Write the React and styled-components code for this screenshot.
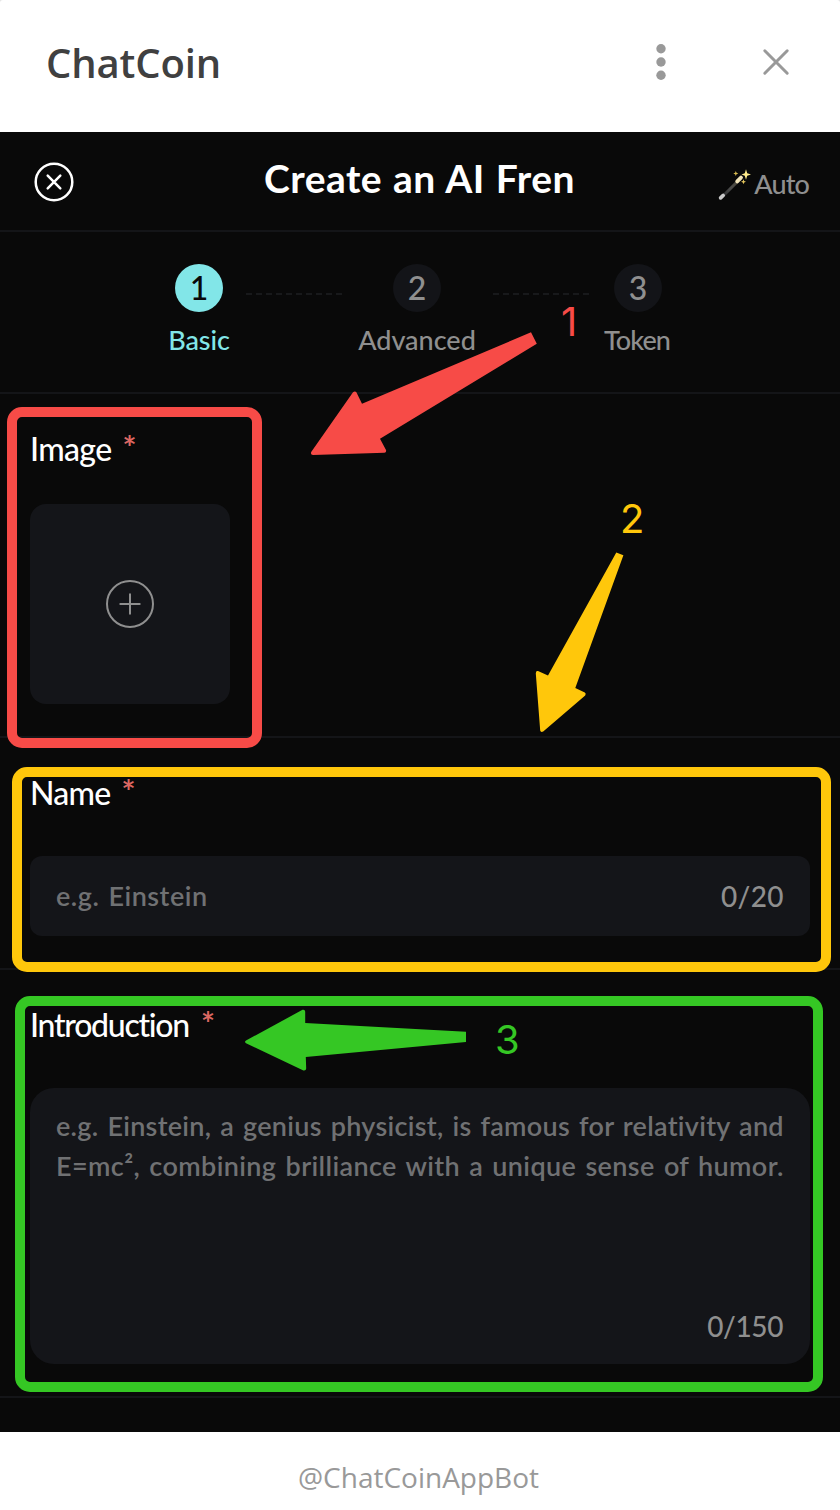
import React from "react";
import styled, { createGlobalStyle } from "styled-components";

const geometric = 'Lato, "Liberation Sans", sans-serif';
const humanist = '"Open Sans", "Noto Sans", sans-serif';

const GlobalStyle = createGlobalStyle`
  * { box-sizing: border-box; }
  html, body { margin: 0; padding: 0; background: #e4e4e4; }
`;

const Window = styled.div`
  position: relative;
  display: flex;
  flex-direction: column;
  width: 840px;
  height: 1510px;
  overflow: hidden;
  border-radius: 3px 3px 0 0;
  background: #fff;
  font-variant-ligatures: none;
`;

const TitleBar = styled.header`
  display: flex;
  align-items: center;
  flex: none;
  height: 132px;
  padding: 0 45px 8px 46px;
`;

const AppName = styled.h1`
  flex: 1;
  margin: 0;
  padding-top: 2px;
  font: 600 40px/54px ${humanist};
  letter-spacing: ${(p) => p.$track || 0}px;
  color: #404040;
`;

const WindowActions = styled.div`
  display: flex;
  align-items: center;
  gap: 90px;
`;

const Icon = styled.svg`
  display: block;
  flex: none;
  overflow: visible;
`;

const Body = styled.main`
  display: flex;
  flex-direction: column;
  flex: none;
  height: 1300px;
  background: #090909;
  font-family: ${geometric};
`;

const PageHeader = styled.div`
  display: grid;
  grid-template-columns: 120px 1fr 120px;
  align-items: center;
  height: 100px;
  padding: 0 31px 0 34px;
  border-bottom: 2px solid #141518;
`;

const PageTitle = styled.h2`
  margin: 0;
  padding: 0 4px 6px 0;
  text-align: center;
  white-space: nowrap;
  font: 700 39px/52px ${geometric};
  word-spacing: 1px;
  letter-spacing: ${(p) => p.$track || 0}px;
  color: #fff;
`;

const AutoButton = styled.div`
  display: flex;
  align-items: center;
  justify-content: flex-end;
  gap: 4px;
  padding-top: 6px;
  font-size: 27px;
  font-weight: 500;
  line-height: 36px;
  letter-spacing: ${(p) => p.$track || 0}px;
  color: #8f8f8f;
`;

const Stepper = styled.div`
  display: flex;
  align-items: flex-start;
  height: 162px;
  padding: 32px 0 0 139px;
  border-bottom: 2px solid #141518;
`;

const Step = styled.div`
  display: flex;
  flex-direction: column;
  align-items: center;
  width: 120px;
  gap: 10px;
  font-weight: 500;
  color: ${(p) => (p.$active ? "#82e6e8" : "#8f8f8f")};
`;

const StepNumber = styled.div`
  display: flex;
  align-items: center;
  justify-content: center;
  width: 48px;
  height: 48px;
  border-radius: 50%;
  background: ${(p) => (p.$active ? "#82e6e8" : "#131418")};
  color: ${(p) => (p.$active ? "#090909" : "#8f8f8f")};
  font-size: 32px;
  line-height: 48px;
`;

const StepLabel = styled.div`
  padding-right: ${(p) => p.$inset || 0}px;
  font-size: 27px;
  line-height: 36px;
  white-space: nowrap;
  letter-spacing: ${(p) => p.$track || 0}px;
`;

const StepLink = styled.div`
  width: 96px;
  margin: 29px ${(p) => p.$right}px 0 ${(p) => p.$left}px;
  border-top: 2px dashed #18191b;
`;

const Section = styled.section`
  display: flex;
  flex-direction: column;
  gap: ${(p) => p.$gap}px;
  padding: 32px 30px;
  border-bottom: 2px solid #141518;
`;

const FieldLabel = styled.div`
  display: flex;
  gap: ${(p) => p.$gap || 11}px;
  height: 46px;
  font-size: 32px;
  font-weight: 500;
  line-height: 46px;
  letter-spacing: ${(p) => p.$track || 0}px;
  color: #fff;
`;

const Required = styled.span`
  font-size: 33px;
  font-weight: 700;
  line-height: 42px;
  letter-spacing: 0;
  color: #db6762;
`;

const UploadTile = styled.div`
  display: flex;
  align-items: center;
  justify-content: center;
  width: 200px;
  height: 200px;
  border-radius: 16px;
  background: #141519;
`;

const TextField = styled.div`
  display: flex;
  align-items: center;
  justify-content: space-between;
  height: 80px;
  padding: 0 26px;
  border-radius: 12px;
  background: #141519;
`;

const TextArea = styled.div`
  display: flex;
  flex-direction: column;
  justify-content: space-between;
  height: 276px;
  padding: 18px 26px 18px;
  border-radius: 24px;
  background: #141519;
`;

const Placeholder = styled.div`
  font-size: 27px;
  font-weight: 600;
  line-height: 40px;
  white-space: nowrap;
  word-spacing: 2px;
  letter-spacing: ${(p) => p.$track || 0}px;
  color: #707173;
`;

const Counter = styled.div`
  align-self: ${(p) => (p.$end ? "flex-end" : "auto")};
  padding-right: ${(p) => (p.$end ? 1 : 0)}px;
  font-size: 28px;
  font-weight: 500;
  line-height: 40px;
  letter-spacing: ${(p) => p.$track || 0}px;
  color: #8f8f8f;
`;

const Footer = styled.footer`
  display: flex;
  align-items: center;
  justify-content: center;
  flex: 1;
  padding: 12px 3px 0 0;
  font: 400 28px/38px ${humanist};
  letter-spacing: ${(p) => p.$track || 0}px;
  color: #999;
`;

const Frame = styled.div`
  position: absolute;
  left: ${(p) => p.$x}px;
  top: ${(p) => p.$y}px;
  width: ${(p) => p.$w}px;
  height: ${(p) => p.$h}px;
  border: 10px solid ${(p) => p.$color};
  border-radius: 15px;
`;

const Arrows = styled.svg`
  position: absolute;
  inset: 0;
`;

const Mark = styled.div`
  position: absolute;
  left: ${(p) => p.$x}px;
  top: ${(p) => p.$y}px;
  font: 400 40px/48px Inter, sans-serif;
  color: ${(p) => p.$color};
`;

const RED = "#f74b47";
const YELLOW = "#ffc70b";
const GREEN = "#35c724";

function Wand() {
  return (
    <Icon width="32" height="32" viewBox="0 -1 32 32">
      <defs>
        <linearGradient id="rod" x1="0" y1="1" x2="1" y2="0">
          <stop offset="0" stopColor="#2c2d2f" />
          <stop offset="0.5" stopColor="#4b4b4a" />
          <stop offset="1" stopColor="#4b473a" />
        </linearGradient>
      </defs>
      <path d="M5 27 20 12" stroke="url(#rod)" strokeWidth="3" />
      <path d="M2.6 28.9 5.2 26.4" stroke="#c9c9c9" strokeWidth="3.6" strokeLinecap="round" />
      <path d="M19.2 12.4 23 8.6" stroke="#f3e6bb" strokeWidth="3.8" strokeLinecap="round" />
      <path d="M28 0.2 29.2 4.3 33 5.5 29.2 6.7 28 10.8 26.8 6.7 23.5 5.5 26.8 4.3Z" fill="#ffec8a" />
      <path d="M17.8 2 18.5 3.8 20.3 4.5 18.5 5.2 17.8 7 17.1 5.2 15.3 4.5 17.1 3.8Z" fill="#d7b94f" />
      <path d="M25.5 10.3 26.2 12.1 28 12.8 26.2 13.5 25.5 15.3 24.8 13.5 23 12.8 24.8 12.1Z" fill="#e4c65c" />
    </Icon>
  );
}

export default function App() {
  return (
    <>
      <GlobalStyle />
      <Window>
        <TitleBar>
          <AppName $track={-0.15}>ChatCoin</AppName>
          <WindowActions>
            <Icon width="12" height="38" viewBox="0 0 12 38" fill="#999">
              <circle cx="6" cy="5.8" r="4.7" />
              <circle cx="6" cy="19" r="4.7" />
              <circle cx="6" cy="32.2" r="4.7" />
            </Icon>
            <Icon width="38" height="38" viewBox="0 0 38 38" stroke="#999" strokeWidth="3" strokeLinecap="round">
              <path d="M7.8 7.8 30.2 30.2M30.2 7.8 7.8 30.2" />
            </Icon>
          </WindowActions>
        </TitleBar>

        <Body>
          <PageHeader>
            <Icon width="40" height="40" viewBox="0 0 40 40" fill="none" stroke="#fff" strokeWidth="2.5" strokeLinecap="round">
              <circle cx="20" cy="21" r="18.3" />
              <path d="M13.7 14.7 26.3 27.3M26.3 14.7 13.7 27.3" />
            </Icon>
            <PageTitle $track={0.45}>Create an AI Fren</PageTitle>
            <AutoButton $track={-0.9}>
              <Wand />
              Auto
            </AutoButton>
          </PageHeader>

          <Stepper>
            <Step $active>
              <StepNumber $active>1</StepNumber>
              <StepLabel $track={-0.1}>Basic</StepLabel>
            </Step>
            <StepLink $left={-13} $right={15} />
            <Step>
              <StepNumber>2</StepNumber>
              <StepLabel>Advanced</StepLabel>
            </Step>
            <StepLink $left={16} $right={-11} />
            <Step>
              <StepNumber>3</StepNumber>
              <StepLabel $track={-0.9} $inset={2}>Token</StepLabel>
            </Step>
          </Stepper>

          <Section $gap={32}>
            <FieldLabel $track={-0.65}>
              Image <Required>*</Required>
            </FieldLabel>
            <UploadTile>
              <Icon width="48" height="48" viewBox="0 0 48 48" fill="none" stroke="#8f8f8f" strokeWidth="2" strokeLinecap="round">
                <circle cx="24" cy="24" r="23" />
                <path d="M24 14.3V33.7M14.3 24H33.7" />
              </Icon>
            </UploadTile>
          </Section>

          <Section $gap={40}>
            <FieldLabel $track={-0.7}>
              Name <Required>*</Required>
            </FieldLabel>
            <TextField>
              <Placeholder $track={0.5}>e.g. Einstein</Placeholder>
              <Counter $track={0.4}>0/20</Counter>
            </TextField>
          </Section>

          <Section $gap={40}>
            <FieldLabel $track={-1.27} $gap={12}>
              Introduction <Required>*</Required>
            </FieldLabel>
            <TextArea>
              <div>
                <Placeholder $track={0.28}>e.g. Einstein, a genius physicist, is famous for relativity and</Placeholder>
                <Placeholder $track={0.39}>E=mc², combining brilliance with a unique sense of humor.</Placeholder>
              </div>
              <Counter $end $track={-0.4}>0/150</Counter>
            </TextArea>
          </Section>
        </Body>

        <Footer>@ChatCoinAppBot</Footer>

        <Frame $x={7} $y={407} $w={255} $h={341} $color={RED} />
        <Frame $x={12} $y={767} $w={819} $h={205} $color={YELLOW} />
        <Frame $x={15} $y={996} $w={808} $h={396} $color={GREEN} />
        <Arrows width="840" height="1510" viewBox="0 0 840 1510">
          <path fill={RED} d="M531 332.3 536.8 343.7 380 438.7 386 450Q386.6 452.6 384.4 452.8L313 454.9Q310.2 454.6 311.2 452L353 392.3Q355 390.6 356.4 392.3L362 403.7Z" />
          <path fill={YELLOW} d="M616.3 552.5 623.4 555.3 575.3 688 584.8 692.6Q586.5 693.8 585.2 695.4L543.2 731.6Q540.6 732.6 540.2 730.6L535.8 673.4Q535.8 670.6 538 671.1L548 675.5Z" />
          <path fill={GREEN} d="M466 1031.7V1042L305.8 1057 306.2 1068.5Q306 1071 303.4 1070.5L246 1043.2Q244 1041.8 246 1040.5L302.5 1009.8Q305 1009.2 305.2 1011.6L305.2 1023Z" />
        </Arrows>
        <Mark $x={561} $y={298} $color={RED}>1</Mark>
        <Mark $x={620} $y={495} $color={YELLOW}>2</Mark>
        <Mark $x={495} $y={1016} $color={GREEN}>3</Mark>
      </Window>
    </>
  );
}
